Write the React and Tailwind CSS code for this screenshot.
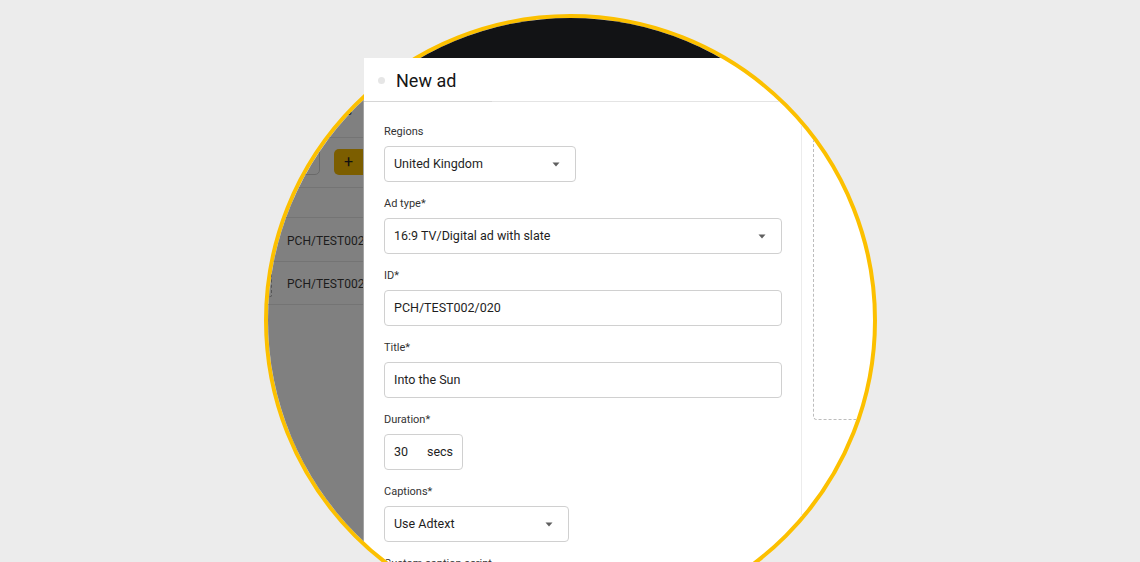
import React from "react";

const font = { fontFamily: 'Roboto, "Noto Sans", sans-serif' };

function Caret() {
  return (
    <svg width="8" height="5" viewBox="0 0 8 5" className="shrink-0">
      <path d="M0.5 0.5 L7.5 0.5 L4 4.5 Z" fill="#5f5f5f" />
    </svg>
  );
}

function Label({ children }) {
  return <div className="h-[16px] mb-[6px] text-[11px] leading-[16px] text-[#333]">{children}</div>;
}

function Select({ value, width }) {
  return (
    <div className={`${width} h-[36px] mb-[14px] flex items-center justify-between pl-[9px] pr-[15px] border border-[#d0d0d0] rounded-[4px] text-[12.5px] text-[#1e1e1e]`}>
      <span>{value}</span>
      <Caret />
    </div>
  );
}

function Input({ value }) {
  return (
    <div className="w-[398px] h-[36px] mb-[14px] flex items-center pl-[9px] border border-[#d0d0d0] rounded-[4px] text-[12.5px] text-[#1e1e1e]">
      {value}
    </div>
  );
}

export default function App() {
  return (
    <div className="relative w-[1140px] h-[562px] overflow-hidden bg-[#ececec] pt-[14px]" style={font}>
      <div className="ml-[264px] w-[613px] h-[613px] rounded-full border-4 border-[#fcc000] overflow-hidden flex flex-col bg-white">
        <div className="h-[40px] shrink-0 bg-[#121315]" />
        <div className="flex flex-1">
          {/* dimmed underlying page */}
          <div className="w-[95px] shrink-0 bg-[#808080] overflow-hidden flex flex-col text-[#1c1c1c]">
            <div className="h-[80px] shrink-0 border-b border-[#747474] flex items-end justify-end pb-[18px] pr-[11px] text-[12px] leading-[16px]">
              Ads
            </div>
            <div className="h-[50px] shrink-0 border-b border-[#747474] flex items-start justify-end gap-[14px] pt-[11px]">
              <div className="h-[26px] px-[8px] flex items-center border border-[#6a6a6a] rounded-[5px] text-[12px] leading-none">
                Filters
              </div>
              <div className="w-[29px] h-[26px] flex items-center justify-center bg-[#7c5e00] rounded-l-[5px] text-[16px] leading-none text-[#111]">
                +
              </div>
            </div>
            <div className="h-[30px] shrink-0 border-b border-[#747474]" />
            <div className="h-[44px] shrink-0 border-b border-[#747474] flex items-center pl-[19px] pt-[3px] text-[12px] whitespace-nowrap">
              PCH/TEST002
            </div>
            <div className="h-[43px] shrink-0 border-b border-[#747474] flex items-center whitespace-nowrap text-[12px] pt-[2px]">
              <div className="w-[5px] h-[26px] shrink-0 border border-dashed border-[#555] rounded-[2px] -ml-[1px] mr-[15px]" />
              PCH/TEST002
            </div>
          </div>
          {/* panel */}
          <div className="flex-1 flex flex-col border-l border-[#a3a3a3]">
            <div className="h-[44px] shrink-0 border-b border-[#e4e4e4]" />
            <div className="flex flex-1">
              <div className="w-[438px] shrink-0 border-r border-[#ececec] pl-[20px] pt-[22px]">
                <Label>Regions</Label>
                <Select value="United Kingdom" width="w-[192px]" />
                <Label>Ad type*</Label>
                <Select value="16:9 TV/Digital ad with slate" width="w-[398px]" />
                <Label>ID*</Label>
                <Input value="PCH/TEST002/020" />
                <Label>Title*</Label>
                <Input value="Into the Sun" />
                <Label>Duration*</Label>
                <div className="w-[79px] h-[36px] mb-[14px] flex items-center pl-[9px] border border-[#d0d0d0] rounded-[4px] text-[12.5px] text-[#1e1e1e]">
                  <span className="w-[33px]">30</span>
                  <span>secs</span>
                </div>
                <Label>Captions*</Label>
                <Select value="Use Adtext" width="w-[185px]" />
                <Label>Custom caption script</Label>
              </div>
              <div className="flex-1 pl-[11px]">
                <div className="h-[318px] border border-dashed border-[#bdbdbd] border-r-0 rounded-bl-[4px]" />
              </div>
            </div>
          </div>
        </div>
      </div>
      {/* header piece popping out of the lens */}
      <div className="absolute left-[364px] top-[58px] w-[128px] h-[44px] bg-white border-b border-[#d6d6d6] flex items-center pl-[14px] pt-[2px]">
        <div className="w-[7px] h-[7px] rounded-full bg-[#e6e6e6] mr-[11px]" />
        <span className="text-[18px] leading-none text-[#161616]">New ad</span>
      </div>
    </div>
  );
}
